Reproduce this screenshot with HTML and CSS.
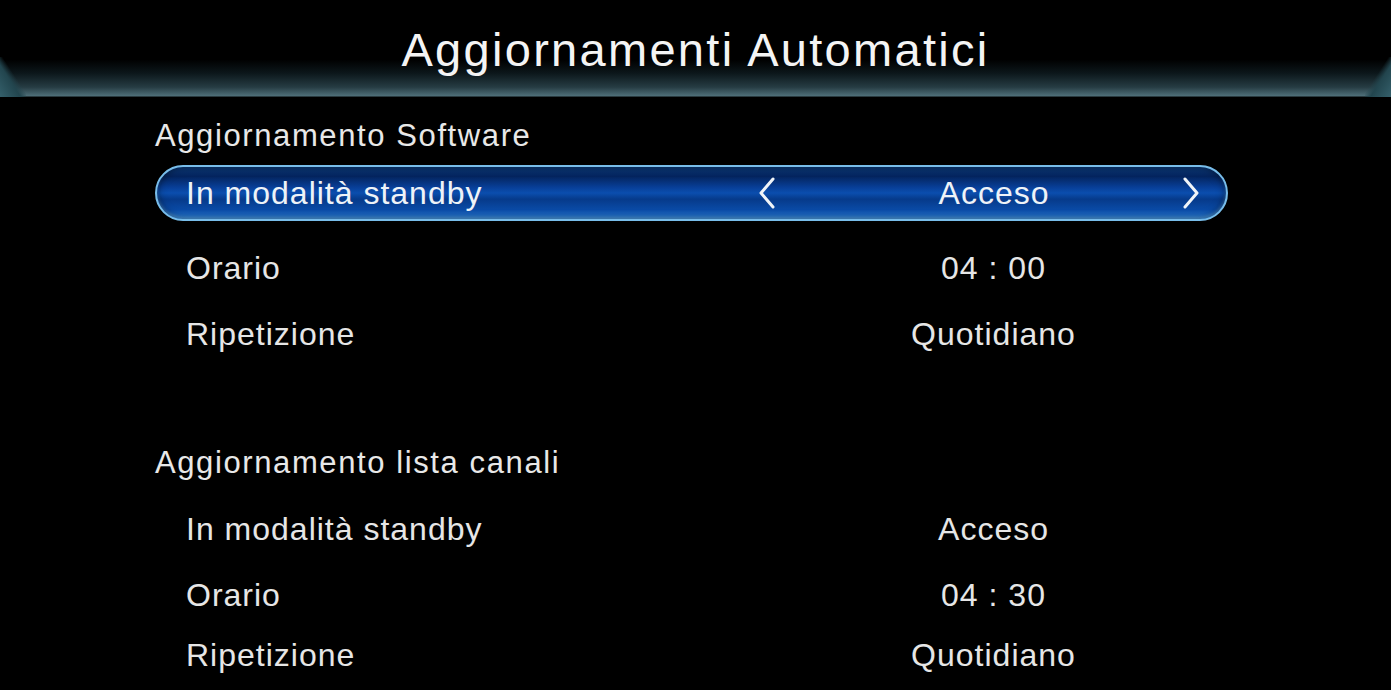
FILE: index.html
```html
<!DOCTYPE html>
<html lang="it">
<head>
  <meta charset="utf-8">
  <title>Aggiornamenti Automatici</title>
  <link rel="stylesheet" href="styles.css">
</head>
<body>
  <div class="header">
    <h1>Aggiornamenti Automatici</h1>
  </div>

  <div class="content">
    <!-- Software -->
    <div class="section first">
      <div class="section-title">Aggiornamento Software</div>
      <div class="row selected">
        <span class="label">In modalità standby</span>
        <div class="value">
          <svg class="arrow" viewBox="0 0 20 32"><polyline points="16,2 4,16 16,30"/></svg>
          <span class="text">Acceso</span>
          <svg class="arrow" viewBox="0 0 20 32"><polyline points="4,2 16,16 4,30"/></svg>
        </div>
      </div>
      <div class="row">
        <span class="label">Orario</span>
        <div class="value"><span class="text">04 : 00</span></div>
      </div>
      <div class="row">
        <span class="label">Ripetizione</span>
        <div class="value"><span class="text">Quotidiano</span></div>
      </div>
    </div>

    <!-- Lista canali -->
    <div class="section second">
      <div class="section-title">Aggiornamento lista canali</div>
      <div class="row">
        <span class="label">In modalità standby</span>
        <div class="value"><span class="text">Acceso</span></div>
      </div>
      <div class="row">
        <span class="label">Orario</span>
        <div class="value"><span class="text">04 : 30</span></div>
      </div>
      <div class="row">
        <span class="label">Ripetizione</span>
        <div class="value"><span class="text">Quotidiano</span></div>
      </div>
    </div>
  </div>
</body>
</html>
```

FILE: styles.css
```css
* {
  box-sizing: border-box;
  margin: 0;
  padding: 0;
}
html, body {
  background: #000;
}
body {
  font-family: 'Liberation Sans', Arial, sans-serif;
  color: #e6e6e6;
  width: 1391px;
  height: 690px;
  overflow: hidden;
}
.header {
  position: relative;
  height: 99px;
  background: linear-gradient(to bottom, #000 0%, #000 60%, #0c171b 74%, #263c43 88%, #4f6f79 97%, #000 98%, #000 100%);
  display: flex;
  justify-content: center;
}
.header::before,
.header::after {
  content: '';
  position: absolute;
  bottom: 2px;
  width: 26px;
  height: 40px;
}
.header::before {
  left: 0;
  background: linear-gradient(to top right, #35606b 0%, #22454e 40%, rgba(0, 0, 0, 0) 55%);
}
.header::after {
  right: 0;
  background: linear-gradient(to top left, #35606b 0%, #22454e 40%, rgba(0, 0, 0, 0) 55%);
}
h1 {
  font-size: 47px;
  font-weight: 400;
  color: #f4f4f4;
  letter-spacing: 2.3px;
  line-height: 1;
  padding-top: 26px;
}
.content {
  padding-left: 155px;
  width: 1228px;
}
.section.first {
  margin-top: 17px;
}
.section.second {
  margin-top: 76px;
}
.section-title {
  height: 40px;
  display: flex;
  align-items: center;
  font-size: 31px;
  letter-spacing: 1.6px;
  color: #e8e8e8;
  margin-bottom: 9px;
}
.section.second .section-title {
  margin-bottom: 13px;
}
.row {
  height: 66px;
  display: flex;
  align-items: center;
  font-size: 32px;
  letter-spacing: 1px;
}
.section.second .row:last-child {
  height: 54px;
}
.label {
  flex: 1;
  padding-left: 31px;
}
.value {
  width: 469px;
  text-align: center;
}
.row.selected {
  height: 56px;
  margin: 4px 0 14px;
  border-radius: 28px;
  border: 2px solid #78bdea;
  background: linear-gradient(to bottom, #0c3b7c 0%, #04245e 18%, #08409a 40%, #0b4eae 50%, #063a8a 62%, #0a4aa6 82%, #2b80d8 100%);
  box-shadow: inset 0 0 8px rgba(0, 0, 0, 0.55), inset 0 -2px 3px rgba(120, 190, 240, 0.5);
  color: #eef3f8;
}
.row.selected .label {
  padding-left: 29px;
}
.row.selected .value {
  display: grid;
  grid-template-columns: 20px 1fr 20px;
  align-items: center;
  padding: 0 25px 0 0;
}
.row.selected .text {
  padding-left: 30px;
}
.arrow {
  width: 20px;
  height: 32px;
  fill: none;
  stroke: #f0f4f8;
  stroke-width: 3;
  stroke-linecap: round;
  stroke-linejoin: round;
}
```
